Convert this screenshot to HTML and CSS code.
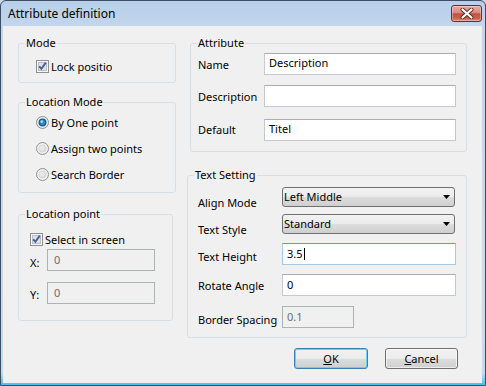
FILE: index.html
```html
<!DOCTYPE html>
<html>
<head>
<meta charset="utf-8">
<link rel="stylesheet" href="styles.css">
</head>
<body>
<div class="window">
  <div class="titlebar">
    <span class="title">Attribute definition</span>
    <span class="close">
      <svg width="14" height="11" viewBox="0 0 14 11"><path d="M2.5 1.5 L11.5 9.5 M11.5 1.5 L2.5 9.5" stroke="#5a2a24" stroke-width="4" stroke-linecap="round"/><path d="M2.5 1.5 L11.5 9.5 M11.5 1.5 L2.5 9.5" stroke="#ffffff" stroke-width="2.2" stroke-linecap="round"/></svg>
    </span>
  </div>
  <div class="client">
    <div class="columns">
      <div class="col-left">
        <fieldset class="group g-mode">
          <legend>Mode</legend>
          <div class="gbody pl17">
            <div class="check-row mode-row">
              <svg class="cb" width="13" height="13" viewBox="0 0 13 13"><rect x="0.5" y="0.5" width="12" height="12" fill="#f5f5f5" stroke="#8e8f8f"/><rect x="2.5" y="2.5" width="8" height="8" fill="#dde1e8" stroke="#b9bec7"/><path d="M3.2 6.3 L5.4 8.8 L9.8 2.6" stroke="#4b5f95" stroke-width="1.9" fill="none"/></svg>
              <span class="clip">Lock position</span>
            </div>
          </div>
        </fieldset>
        <fieldset class="group g-locmode">
          <legend>Location Mode</legend>
          <div class="gbody pl17">
            <div class="radio-row">
              <svg class="rb" width="13" height="13" viewBox="0 0 13 13"><circle cx="6.5" cy="6.5" r="6" fill="#eeeeee" stroke="#8e8f8f"/><circle cx="6.5" cy="6.5" r="4" fill="#1d5f93"/><circle cx="6.5" cy="6.5" r="2.6" fill="#2f86c4"/><circle cx="5.8" cy="5.6" r="1.4" fill="#9fd6f6"/></svg>
              <span>By One point</span>
            </div>
            <div class="radio-row">
              <svg class="rb" width="13" height="13" viewBox="0 0 13 13"><circle cx="6.5" cy="6.5" r="6" fill="#f2f2f2" stroke="#8e8f8f"/><circle cx="6.5" cy="6.5" r="4" fill="#d9d9d9"/><circle cx="6" cy="6" r="2.5" fill="#e8e8e8"/></svg>
              <span>Assign two points</span>
            </div>
            <div class="radio-row">
              <svg class="rb" width="13" height="13" viewBox="0 0 13 13"><circle cx="6.5" cy="6.5" r="6" fill="#f2f2f2" stroke="#8e8f8f"/><circle cx="6.5" cy="6.5" r="4" fill="#d9d9d9"/><circle cx="6" cy="6" r="2.5" fill="#e8e8e8"/></svg>
              <span>Search Border</span>
            </div>
          </div>
        </fieldset>
        <fieldset class="group g-locpoint">
          <legend>Location point</legend>
          <div class="gbody pl11">
            <div class="check-row sel-row">
              <svg class="cb" width="13" height="13" viewBox="0 0 13 13"><rect x="0.5" y="0.5" width="12" height="12" fill="#f5f5f5" stroke="#8e8f8f"/><rect x="2.5" y="2.5" width="8" height="8" fill="#dde1e8" stroke="#b9bec7"/><path d="M3.2 6.3 L5.4 8.8 L9.8 2.6" stroke="#4b5f95" stroke-width="1.9" fill="none"/></svg>
              <span>Select in screen</span>
            </div>
            <div class="xy-row xy-first">
              <span class="xy-label pt7">X:</span>
              <div class="field disabled xy-field">0</div>
            </div>
            <div class="xy-row xy-second">
              <span class="xy-label pt6">Y:</span>
              <div class="field disabled xy-field">0</div>
            </div>
          </div>
        </fieldset>
      </div>
      <div class="col-right">
        <fieldset class="group g-attr">
          <legend>Attribute</legend>
          <div class="gbody pl7">
            <div class="attr-row ar1">
              <span class="attr-label pt5">Name</span>
              <div class="field attr-field">Description</div>
            </div>
            <div class="attr-row ar2">
              <span class="attr-label pt5">Description</span>
              <div class="field attr-field"></div>
            </div>
            <div class="attr-row ar3">
              <span class="attr-label pt4">Default</span>
              <div class="field attr-field">Titel</div>
            </div>
          </div>
        </fieldset>
        <fieldset class="group g-text">
          <legend>Text Setting</legend>
          <div class="gbody pl10">
            <div class="ts-row combo-row tr1">
              <span class="ts-label pt9">Align Mode</span>
              <div class="combo"><span>Left Middle</span><svg class="arrow" width="7" height="4" viewBox="0 0 7 4"><path d="M0 0 H7 L3.5 4 Z" fill="#000"/></svg></div>
            </div>
            <div class="ts-row combo-row tr2">
              <span class="ts-label pt9">Text Style</span>
              <div class="combo"><span>Standard</span><svg class="arrow" width="7" height="4" viewBox="0 0 7 4"><path d="M0 0 H7 L3.5 4 Z" fill="#000"/></svg></div>
            </div>
            <div class="ts-row tr3">
              <span class="ts-label pt7">Text Height</span>
              <div class="field ts-field focused">3.5<span class="caret"></span></div>
            </div>
            <div class="ts-row tr4">
              <span class="ts-label pt5">Rotate Angle</span>
              <div class="field ts-field">0</div>
            </div>
            <div class="ts-row tr5">
              <span class="ts-label pt7">Border Spacing</span>
              <div class="field ts-field disabled short">0.1</div>
            </div>
          </div>
        </fieldset>
      </div>
    </div>
    <div class="buttons">
      <div class="btn default"><span><u>O</u>K</span></div>
      <div class="btn cancel"><span><u>C</u>ancel</span></div>
    </div>
  </div>
</div>
</body>
</html>
```
FILE: styles.css
```css
html, body {
  margin: 0;
  padding: 0;
}
body {
  font-family: "Noto Sans", "DejaVu Sans", sans-serif;
  font-size: 11px;
  color: #000;
  background: #c9dcef;
}
fieldset {
  margin: 0;
  padding: 0;
  min-width: 0;
}
.window {
  width: 486px;
  height: 386px;
  box-sizing: border-box;
  border: 1px solid #3e4e62;
  border-radius: 6px 6px 0 0;
  background: linear-gradient(#b7cfe9 0, #c2d6ec 24px, #c8dbee 80%, #bcdcef 97%, #3fc2ea 100%);
  display: flex;
  flex-direction: column;
  padding: 0 3px 2px 2px;
}
.titlebar {
  height: 25px;
  display: flex;
  align-items: flex-start;
  flex: none;
}
.title {
  font-size: 12px;
  line-height: 16px;
  padding: 5px 0 0 5px;
  color: #000;
}
.close {
  margin: 4px 0 0 auto;
  width: 31px;
  height: 17px;
  box-sizing: border-box;
  border: 1px solid #6d2b24;
  border-radius: 3px;
  background: linear-gradient(#e6aca0 0, #d88a7c 45%, #c5503f 52%, #c9604c 80%, #dc8a74 100%);
  box-shadow: inset 0 0 0 1px rgba(255, 255, 255, 0.35);
  display: flex;
  align-items: center;
  justify-content: center;
}
.client {
  flex: 1;
  background: #f0f0f0;
  padding: 10px 15px 0 15px;
  display: flex;
  flex-direction: column;
}
.columns {
  display: flex;
  gap: 14px;
}
.col-left {
  width: 158px;
  display: flex;
  flex-direction: column;
}
.col-right {
  width: 277px;
  display: flex;
  flex-direction: column;
}
.group {
  border: 1px solid #d5dfe5;
  border-radius: 3px;
  box-sizing: border-box;
}
.group legend {
  margin-left: 6px;
  padding: 0 1px;
  line-height: 14px;
  font-size: 11px;
}
.pl7 { padding-left: 7px; }
.pl10 { padding-left: 10px; }
.pl11 { padding-left: 11px; }
.pl17 { padding-left: 17px; }
.g-mode {
  height: 47px;
}
.g-locmode {
  height: 98px;
  margin-top: 12px;
}
.g-locpoint {
  width: 155px;
  height: 114px;
  margin-top: 14px;
}
.check-row, .radio-row {
  display: flex;
  align-items: center;
  white-space: nowrap;
}
.cb, .rb {
  flex: none;
  margin-right: 2px;
}
.mode-row {
  margin-top: 10px;
  height: 13px;
}
.clip {
  width: 61px;
  overflow: hidden;
  white-space: nowrap;
}
.radio-row {
  height: 26px;
}
.sel-row {
  margin-top: 11px;
  height: 14px;
}
.xy-row {
  display: flex;
  align-items: flex-start;
  height: 22px;
}
.xy-first { margin-top: 3px; }
.xy-second { margin-top: 11px; }
.xy-label {
  width: 17px;
  line-height: 14px;
}
.pt4 { padding-top: 4px; }
.pt5 { padding-top: 5px; }
.pt6 { padding-top: 6px; }
.pt7 { padding-top: 7px; }
.pt9 { padding-top: 9px; }
.field {
  box-sizing: border-box;
  height: 22px;
  background: #fff;
  border: 1px solid #c5c9cf;
  border-top-color: #abadb3;
  padding: 3px 4px 0 4px;
  line-height: 14px;
  white-space: nowrap;
}
.field.disabled {
  background: #f0f0f0;
  border-color: #adb2b5;
  color: #6d6d6d;
  padding-left: 6px;
}
.field.focused {
  border-color: #a6c9e6;
  border-top-color: #5d9bd0;
}
.caret {
  display: inline-block;
  width: 0;
  height: 12px;
  border-left: 1px solid #000;
  vertical-align: -2px;
  margin-left: 1px;
}
.xy-field {
  width: 108px;
}
.g-attr {
  height: 116px;
}
.attr-row {
  display: flex;
  align-items: flex-start;
  height: 22px;
}
.ar1 { margin-top: 3px; }
.ar2 { margin-top: 10px; }
.ar3 { margin-top: 12px; }
.attr-label {
  width: 66px;
  line-height: 14px;
}
.attr-field {
  width: 192px;
  padding-top: 2px;
}
.g-text {
  height: 170px;
  width: 280px;
  margin-top: 16px;
  margin-left: -3px;
}
.ts-row {
  display: flex;
  align-items: flex-start;
  height: 22px;
}
.combo-row { height: 20px; }
.tr1 { margin-top: 5px; }
.tr2 { margin-top: 7px; }
.tr3 { margin-top: 9px; }
.tr4 { margin-top: 9px; }
.tr5 { margin-top: 10px; }
.ts-label {
  width: 84px;
  line-height: 14px;
  white-space: nowrap;
}
.combo {
  box-sizing: border-box;
  width: 173px;
  height: 20px;
  border: 1px solid #707070;
  border-radius: 3px;
  background: linear-gradient(#f2f2f2 0, #ebebeb 50%, #dddddd 50%, #cfcfcf 100%);
  display: flex;
  align-items: center;
  padding-left: 1px;
  line-height: 14px;
}
.arrow {
  margin-left: auto;
  margin-right: 4px;
}
.ts-field {
  width: 174px;
  padding-top: 3px;
}
.ts-field.short {
  width: 72px;
  padding-left: 4px;
}
.buttons {
  display: flex;
  justify-content: flex-end;
  gap: 17px;
  margin-top: 10px;
  padding-right: 9px;
}
.btn {
  box-sizing: border-box;
  height: 21px;
  border: 1px solid #707070;
  border-radius: 3px;
  background: linear-gradient(#f2f2f2 0, #ebebeb 50%, #dddddd 50%, #cfcfcf 100%);
  box-shadow: inset 0 0 0 1px rgba(255, 255, 255, 0.6);
  display: flex;
  align-items: center;
  justify-content: center;
  line-height: 14px;
}
.btn.default {
  width: 74px;
  border-color: #3c7fb1;
  box-shadow: inset 0 0 0 1px #6ad1f4;
}
.btn.cancel {
  width: 73px;
}
```
